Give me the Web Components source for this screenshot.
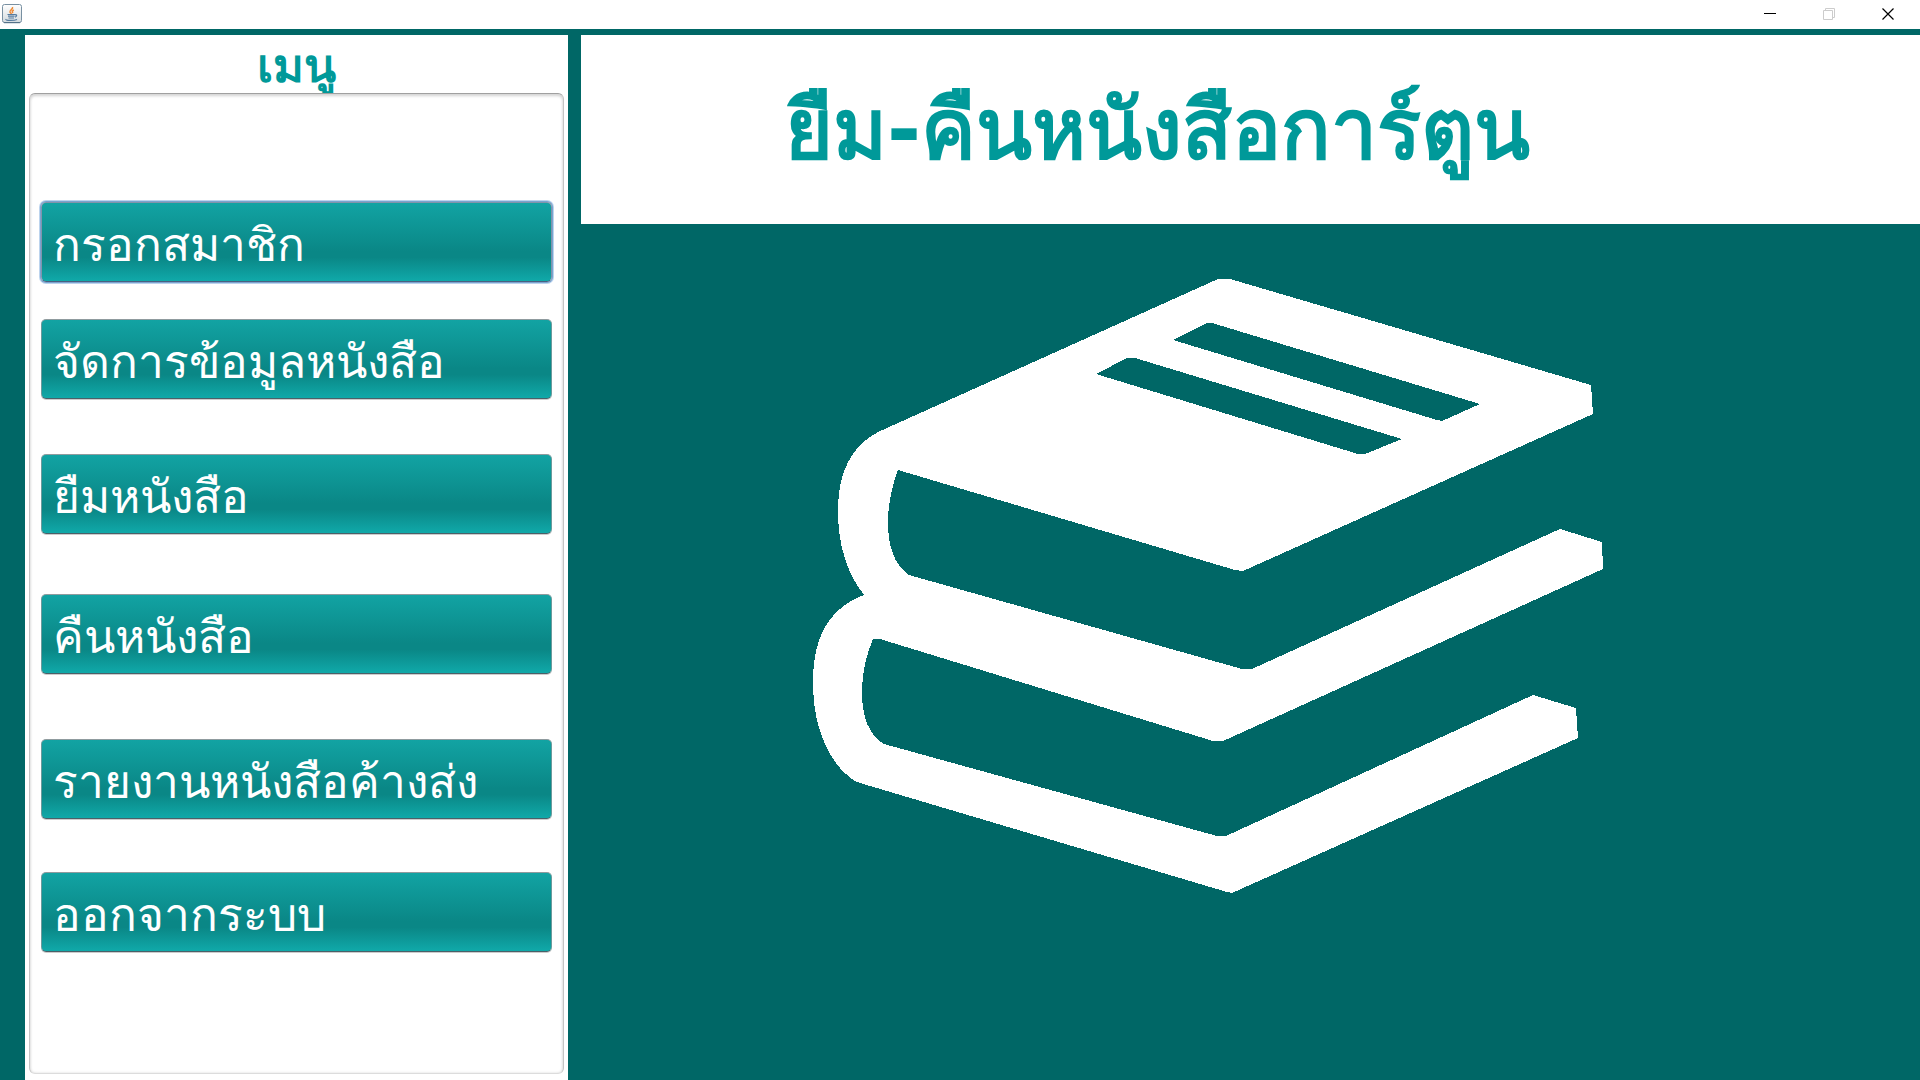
<!DOCTYPE html>
<html lang="th">
<head>
<meta charset="utf-8">
<title>ยืม-คืนหนังสือการ์ตูน</title>
<style>
  html, body { margin: 0; height: 100%; }
  body { font-family: Tahoma, "DejaVu Sans", "Noto Sans", sans-serif; background: #006766; overflow: hidden; }
</style>
</head>
<body>
<rental-window>
  <title-bar slot="bar"></title-bar>
  <side-menu slot="menu" heading="เมนู">
    <menu-button focused>กรอกสมาชิก</menu-button>
    <menu-button>จัดการข้อมูลหนังสือ</menu-button>
    <menu-button>ยืมหนังสือ</menu-button>
    <menu-button>คืนหนังสือ</menu-button>
    <menu-button>รายงานหนังสือค้างส่ง</menu-button>
    <menu-button>ออกจากระบบ</menu-button>
  </side-menu>
  <page-banner slot="main">ยืม-คืนหนังสือการ์ตูน</page-banner>
  <book-picture slot="main"></book-picture>
</rental-window>
<script>
const define = (name, html) => customElements.define(name, class extends HTMLElement {
  constructor() {
    super();
    const t = document.createElement('template');
    t.innerHTML = html;
    this.attachShadow({ mode: 'open' }).append(t.content.cloneNode(true));
  }
  connectedCallback() {
    const h = this.shadowRoot.querySelector('[data-heading]');
    if (h) h.textContent = this.getAttribute('heading');
  }
});

define('rental-window', `
<style>
  :host { display: flex; flex-direction: column; height: 100vh; }
  .body { flex: 1; min-height: 0; display: flex; gap: 13px; padding: 6px 0 0 25px; }
  .side { display: flex; flex: 0 0 543px; }
  main { flex: 1; min-width: 0; display: flex; flex-direction: column; }
</style>
<slot name="bar"></slot>
<div class="body">
  <div class="side"><slot name="menu"></slot></div>
  <main><slot name="main"></slot></main>
</div>`);

define('title-bar', `
<style>
  :host { display: flex; flex: 0 0 29px; justify-content: space-between; background: #fff; }
  .icon { display: block; margin: 4px 2px; }
  .controls { display: flex; gap: 1px; padding-right: 3px; }
  button { width: 58px; height: 28px; padding: 0; border: 0; background: none; display: flex; align-items: center; justify-content: center; }
  svg { display: block; }
</style>
<svg class="icon" width="20" height="20" viewBox="0 0 20 20">
  <defs><linearGradient id="g" x2="0" y2="1"><stop offset="0" stop-color="#fff"/><stop offset="1" stop-color="#d3dade"/></linearGradient></defs>
  <rect x=".5" y=".5" width="19" height="18" rx="2" fill="url(#g)" stroke="#7890a2"/>
  <path d="M2 18.7h16" stroke="#4d6b82"/>
  <path d="M10.5 3c1 2-3 3-2.500 5 .3 1 1.200 1.300 1.500 2M11.800 6c-2 1-1.800 2-.8 3" fill="none" stroke="#ee8a35" stroke-width="1.500"/>
  <path d="M5.500 10.500h8M6 12.200h6.500M6.500 14h5.500M13 11c2-.8 2.500 1 0 2.200M4 15.200c-1.200 1.500 8 1.600 11 .3" fill="none" stroke="#557b9f" stroke-width="1.200"/>
</svg>
<div class="controls">
  <button aria-label="ย่อ"><svg width="12" height="12"><path d="M0 5.500h12" stroke="#000"/></svg></button>
  <button aria-label="คืนค่า" disabled><svg width="12" height="12" fill="none" stroke="#ccc"><path d="M.5 2.500h9v9h-9zM2.500 2.500v-2h9v9h-2"/></svg></button>
  <button aria-label="ปิด"><svg width="12" height="12"><path d="M.5.5l11 11M11.500.5l-11 11" stroke="#000" stroke-width="1.200"/></svg></button>
</div>`);

define('side-menu', `
<style>
  :host { flex: 1; display: flex; flex-direction: column; background: #fff; }
  h2 { margin: 0; height: 58px; overflow: hidden; font-size: 47px; line-height: 62px; text-align: center; color: #009999; }
  nav { flex: 1; margin: 0 4px 6px; padding: 108px 11px 0; box-sizing: border-box; border: 1px solid #c4c4c4; border-top-color: #a0a0a0; border-bottom-color: #dcdcdc; border-radius: 6px;
    box-shadow: inset 0 2px 3px #d4d4d4, inset 0 0 3px #ddd;
    display: grid; grid-template-rows: 117px 135px 140px 145px 133px 80px; align-items: start; align-content: start; }
</style>
<h2 data-heading></h2>
<nav><slot></slot></nav>`);

define('menu-button', `
<style>
  :host { display: flex; }
  button { flex: 1; height: 80px; box-sizing: border-box; padding: 6px 0 0 11px; text-align: left; white-space: nowrap;
    font-family: inherit; font-size: 46px; line-height: 72px; color: #fff;
    border: 1px solid #6c9a9c; border-top-color: #8f9b9e; border-bottom-color: #4a6068; border-radius: 5px;
    background: linear-gradient(#12a3a3, #0a8786 62%, #0a8786 70%, #10a9a9); box-shadow: 0 1px 0 #ccc; }
  :host([focused]) button { box-shadow: 0 0 0 1px #7ba3cf, 0 0 0 2px #bcd4ee; border-color: #8294ab #8294ab #4a6080; }
</style>
<button type="button"><slot></slot></button>`);

define('page-banner', `
<style>
  :host { display: block; background: #fff; flex: 0 0 189px; }
  h1 { margin: 0; padding-left: 204px; font-size: 82px; line-height: 189px; color: #009999; white-space: nowrap; }
</style>
<h1><slot></slot></h1>`);

define('book-picture', `
<style>
  :host { display: block; padding: 55px 0 0 232px; }
  svg { display: block; }
</style>
<svg width="790" height="614" viewBox="813 279 790 614" fill="#fff" fill-rule="evenodd" shape-rendering="crispEdges" role="img" aria-label="หนังสือ">
  <path d="M864 595Q838 562 838 510Q838 453 878 432L1218 279H1230L1591 385L1593 414L1243 571L1235 570L898 470Q888 497 888 522Q888 561 909 575L1242 669H1252L1560 529L1602 542L1603 569L1223 741H1213L880 639H873Q862 665 862 692Q862 731 884 744L1217 836H1226L1533 695L1576 708L1578 738L1232 893L1227 892L860 783Q852 781 840 768Q813 736 813 681Q813 614 864 595Z
  M1207 323H1212L1480 404L1442 421L1437 420L1173 340Z
  M1127 358H1135L1402 439L1365 454H1358L1096 374Z"/>
</svg>`);
</script>
</body>
</html>
